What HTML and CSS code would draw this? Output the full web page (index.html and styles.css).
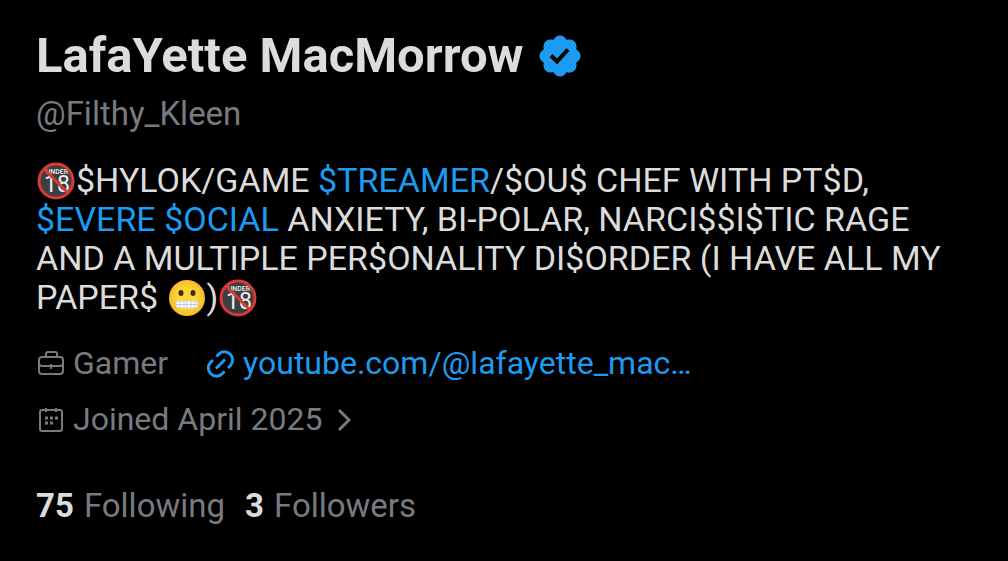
FILE: index.html
```html
<!DOCTYPE html>
<html lang="en">

<head>
    <meta charset="UTF-8">
    <meta name="viewport" content="width=device-width, initial-scale=1">
    <title>LafaYette MacMorrow (@Filthy_Kleen)</title>
    <link rel="stylesheet" href="styles.css">
</head>

<body>
    <!-- Shared emoji artwork -->
    <svg class="sprite" aria-hidden="true">
        <symbol id="under18" viewBox="0 0 38 38">
            <circle cx="19" cy="19" r="17" fill="#3c3e41" />
            <text class="under-label" x="20" y="12" text-anchor="middle">UNDER</text>
            <text class="under-number" x="20" y="30" text-anchor="middle">18</text>
            <path d="M7 7L31 31" stroke="#d83a34" stroke-width="3" />
            <circle cx="19" cy="19" r="17" fill="none" stroke="#d83a34" stroke-width="3" />
        </symbol>
    </svg>

    <main class="profile">
        <h1 class="name">
            LafaYette MacMorrow
            <svg class="badge" viewBox="0 0 22 22" role="img" aria-label="Verified account">
                <path fill="#1d9bf0" d="M20.396 11c-.018-.646-.215-1.275-.57-1.816-.354-.54-.852-.972-1.438-1.246.223-.607.27-1.264.14-1.897-.131-.634-.437-1.218-.882-1.687-.47-.445-1.053-.75-1.687-.882-.633-.13-1.29-.083-1.897.14-.273-.587-.704-1.086-1.245-1.44S11.647 1.62 11 1.604c-.646.017-1.273.213-1.813.568s-.969.854-1.24 1.44c-.608-.223-1.267-.272-1.902-.14-.635.13-1.22.436-1.69.882-.445.47-.749 1.055-.878 1.688-.13.633-.08 1.29.144 1.896-.587.274-1.087.705-1.443 1.245-.356.54-.555 1.17-.574 1.817.02.647.218 1.276.574 1.817.356.54.856.972 1.443 1.245-.224.606-.274 1.263-.144 1.896.13.634.433 1.218.877 1.688.47.443 1.054.747 1.687.878.633.132 1.29.084 1.897-.136.274.586.705 1.084 1.246 1.439.54.354 1.17.551 1.816.569.647-.016 1.276-.213 1.817-.567s.972-.854 1.245-1.44c.604.239 1.266.296 1.903.164.636-.132 1.22-.447 1.68-.907.46-.46.776-1.044.908-1.681s.075-1.299-.165-1.903c.586-.274 1.084-.705 1.439-1.246.354-.54.551-1.17.569-1.816zM9.662 14.85l-3.429-3.428 1.293-1.302 2.072 2.072 4.4-4.794 1.347 1.246z" />
            </svg>
        </h1>
        <p class="handle">@Filthy_Kleen</p>

        <p class="bio">
            <svg class="emoji" role="img" aria-label="No one under eighteen"><use href="#under18" /></svg>$HYLOK/GAME <a href="#">$TREAMER</a>/$OU$ CHEF WITH PT$D,<br>
            <a href="#">$EVERE</a> <a href="#">$OCIAL</a> ANXIETY, BI-POLAR, NARCI$$I$TIC RAGE<br>
            AND A MULTIPLE PER$ONALITY DI$ORDER (I HAVE ALL MY<br>
            PAPER$ <svg class="emoji" viewBox="0 0 38 38" role="img" aria-label="Grimacing face">
                <defs>
                    <radialGradient id="face">
                        <stop offset="0.5" stop-color="#fdd835" />
                        <stop offset="1" stop-color="#f6b92c" />
                    </radialGradient>
                </defs>
                <circle cx="19" cy="19" r="18" fill="url(#face)" />
                <ellipse cx="13" cy="14" rx="2.500" ry="3" fill="#422b0d" />
                <ellipse cx="25" cy="14" rx="2.500" ry="3" fill="#422b0d" />
                <rect x="8" y="22" width="22" height="7" rx="3" fill="#fff" stroke="#d3d3dc" />
                <path d="M8 25.500h22M12 22v7M16 22v7M19 22v7M23 22v7M27 22v7" stroke="#b9bcc8" stroke-width="0.8" />
            </svg>)<svg class="emoji" role="img" aria-label="No one under eighteen"><use href="#under18" /></svg>
        </p>

        <ul class="meta">
            <li>
                <svg class="icon" viewBox="0 0 30 30" aria-hidden="true">
                    <rect x="3" y="8" width="24" height="17" rx="3" />
                    <path d="M10 8V5a2 2 0 0 1 2-2h7a2 2 0 0 1 2 2v3M3 14q0 3 3 3h18q3 0 3-3M15 15v5" />
                </svg>
                Gamer
            </li>
            <li>
                <a href="#">
                    <svg class="icon link-icon" viewBox="0 0 30 30" aria-hidden="true">
                        <path d="M10.500 7.500l2-2a7.700 7.700 0 0 1 12 11l-2.500 2.500M18.500 22.500l-2 2a7.700 7.700 0 0 1-12-11l2.500-2.500M10 19.500l9-9" />
                    </svg>
                    youtube.com/@lafayette_mac…
                </a>
            </li>
        </ul>

        <a class="joined" href="#">
            <svg class="icon" viewBox="0 0 30 30" aria-hidden="true">
                <rect x="4" y="5" width="22" height="21" rx="2" />
                <path d="M10 3v4M20 3v4" />
                <path d="M9 13h3M14 13h3M19 13h3M9 18h3M14 18h3" stroke-width="3" />
            </svg>
            Joined April 2025
            <svg class="chevron" viewBox="0 0 14 24" aria-hidden="true">
                <path d="M2 2l10 10L2 22" />
            </svg>
        </a>

        <div class="stats">
            <a href="#"><strong>75</strong> Following</a>
            <a href="#"><strong>3</strong> Followers</a>
        </div>
    </main>
</body>

</html>
```
FILE: styles.css
```css
/* Basic reset */
body,
h1,
p,
ul {
    margin: 0;
    padding: 0;
}

body {
    background: #000;
    color: #dcdcdc;
    font-family: Roboto, "Liberation Sans", sans-serif;
    font-size: 33px;
    line-height: 39px;
}

a {
    color: #1d9bf0;
    text-decoration: none;
}

.sprite {
    display: none;
}

.profile {
    padding: 28px 36px;
}

/* Name and handle */
.name {
    display: flex;
    align-items: center;
    gap: 12px;
    font-size: 49px;
    line-height: 56px;
    font-weight: 700;
}

.badge {
    width: 48px;
    height: 48px;
}

.handle {
    margin-top: 10px;
    color: #777b80;
}

/* Bio */
.bio {
    margin-top: 28px;
    font-size: 34px;
    white-space: nowrap;
}

.emoji {
    width: 40px;
    height: 38px;
    margin: -4px 0;
    vertical-align: -4px;
}

.under-label {
    font: 500 7px Roboto, sans-serif;
    fill: #eee;
}

.under-number {
    font: 400 23px Roboto, sans-serif;
    fill: #eee;
}

/* Job, link and join date */
.meta {
    display: flex;
    gap: 38px;
    margin-top: 27px;
    list-style: none;
}

.meta,
.joined {
    font-size: 32px;
    color: #777b80;
}

.meta li,
.meta a,
.joined {
    display: flex;
    align-items: center;
    gap: 7px;
}

.icon {
    width: 30px;
    height: 30px;
    fill: none;
    stroke: currentColor;
    stroke-width: 2;
}

.link-icon {
    stroke-width: 3;
}

.joined {
    margin-top: 17px;
}

.chevron {
    width: 14px;
    height: 24px;
    margin-left: 8px;
    fill: none;
    stroke: currentColor;
    stroke-width: 3;
}

/* Follow counts */
.stats {
    display: flex;
    gap: 20px;
    margin-top: 47px;
}

.stats a {
    display: flex;
    gap: 10px;
    color: #777b80;
}

.stats strong {
    color: #dcdcdc;
}
```
